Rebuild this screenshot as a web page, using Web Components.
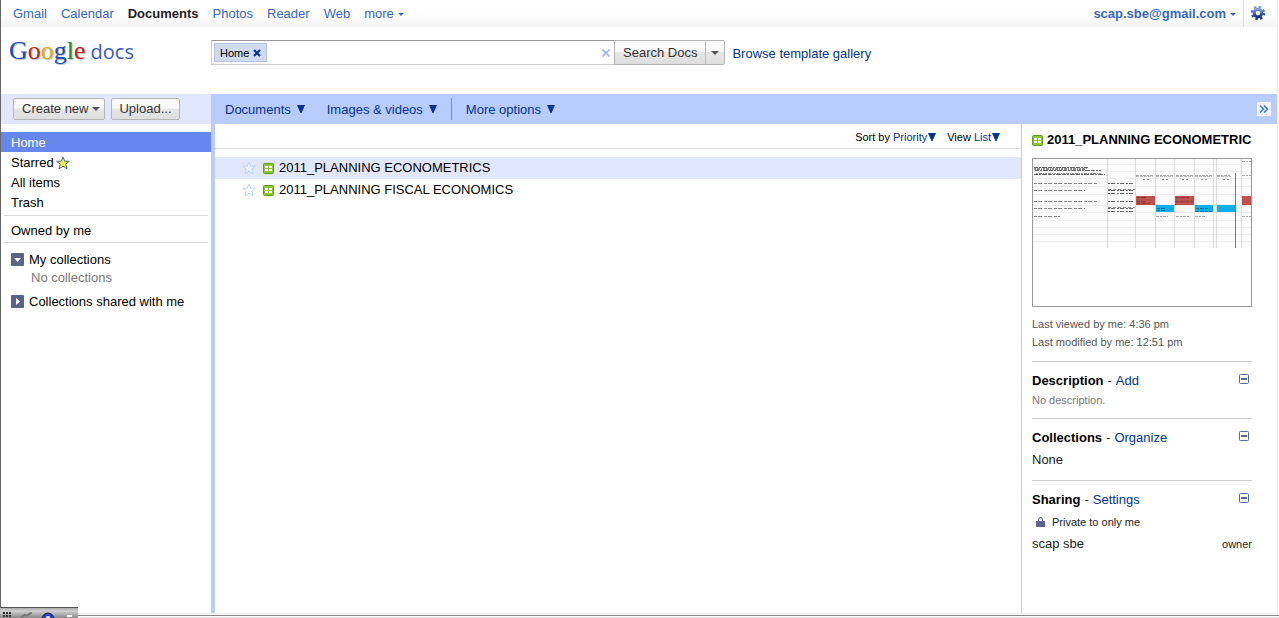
<!DOCTYPE html>
<html lang="en">
<head>
<meta charset="utf-8">
<title>Google Docs - Home</title>
<style>
  html, body { margin: 0; height: 100%; }
  body { font: 13px/20px "Liberation Sans", Arial, sans-serif; color: #000; background: #fff; overflow: hidden; }
</style>
</head>
<body>
<docs-app></docs-app>
<script>
const base = `
  *, *::before, *::after { box-sizing: border-box; }
  :host { display: block; }
  a { color: #039; text-decoration: none; }
  button { font: inherit; color: inherit; margin: 0; padding: 0; border: 0; background: none; cursor: pointer; }
  svg { display: block; flex: none; }
  h2, h3, p, ul { margin: 0; padding: 0; font-size: inherit; list-style: none; }
`;
function define(name, css, html) {
  const tpl = document.createElement('template');
  tpl.innerHTML = `<style>${base}${css}</style>${html}`;
  customElements.define(name, class extends HTMLElement {
    constructor() {
      super();
      this.attachShadow({ mode: 'open' }).append(tpl.content.cloneNode(true));
    }
  });
}

define('sheet-icon', `:host { flex: none; }`, `
  <svg width="11" height="11" viewBox="0 0 11 11" aria-hidden="true">
    <rect x=".5" y=".5" width="10" height="10" rx="1" fill="#8fc52f" stroke="#5c9e1c"/>
    <path d="M2 3h3v2H2zM6 3h3v2H6zM2 6h3v2H2zM6 6h3v2H6z" fill="#fff"/>
  </svg>`);

define('star-toggle', `:host { flex: none; } button { display: block; }`, `
  <button aria-label="Star">
    <svg width="14" height="14" viewBox="0 0 14 14">
      <path d="M7 .9l1.7 4.2 4.6.2-3.6 2.9 1.3 4.6L7 10.2l-4 2.6 1.3-4.6L.7 5.3l4.6-.2z" fill="#fff" fill-opacity=".5" stroke="#b5d3f5"/>
    </svg>
  </button>`);

define('menu-link', `
  button { display: flex; align-items: center; gap: 6px; color: #039; line-height: 20px; white-space: nowrap; }
  span { padding-top: 2px; }`, `
  <button><span><slot></slot></span>
    <svg width="8" height="8" viewBox="0 0 8 8"><path d="M0 0h8L4.500 8h-1z" fill="#039"/></svg>
  </button>`);

define('push-button', `
  button {
    display: flex; align-items: center; justify-content: center; width: 100%; height: 100%; gap: 4px;
    padding: 0 8px; border: 1px solid #b4b4b4; border-radius: var(--radius, 2px);
    background: linear-gradient(#fafafa 0 45%, #e6e6e6 50%, #dedede); color: #333; white-space: nowrap;
  }
  :host([menu]) button { padding: 0 4px 0 8px; }
  :host([compact]) button { padding: 0 7px; }
  :host([bare]) button { padding: 0; }`, `
  <button><slot></slot></button>`);

define('top-bar', `
  :host { display: flex; justify-content: space-between; height: 27px; padding-left: 12px; background: linear-gradient(#fff 50%, #f3f3f3); }
  nav, .account { display: flex; align-items: center; gap: 14px; }
  a { color: #36c; }
  a.current { color: #222; font-weight: bold; }
  .more { display: flex; align-items: center; gap: 4px; }
  .account { gap: 7px; }
  .account a { font-weight: bold; }
  .gear { display: flex; align-items: center; justify-content: center; width: 34px; height: 26px; padding-right: 6px; border-left: 1px solid #ddd; align-self: flex-start; }`, `
  <nav aria-label="Google products">
    <a href="#gmail">Gmail</a><a href="#calendar">Calendar</a><a href="#docs" class="current">Documents</a>
    <a href="#photos">Photos</a><a href="#reader">Reader</a><a href="#web">Web</a>
    <a href="#more" class="more">more <svg width="6" height="4" viewBox="0 0 6 4"><path d="M0 1h6L3 4z" fill="#36c"/></svg></a>
  </nav>
  <div class="account">
    <a href="#account" class="more">scap.sbe@gmail.com <svg width="6" height="4" viewBox="0 0 6 4"><path d="M0 1h6L3 4z" fill="#36c"/></svg></a>
    <button class="gear" aria-label="Settings">
      <svg width="14" height="14" viewBox="-7 -7 14 14">
        <defs><linearGradient id="g" x1="0" y1="0" x2="0" y2="1"><stop offset="0" stop-color="#7c9bd4"/><stop offset="1" stop-color="#17357f"/></linearGradient></defs>
        <circle r="6" fill="none" stroke="url(#g)" stroke-width="2.400" stroke-dasharray="2.350 2.360"/>
        <circle r="3.800" fill="none" stroke="url(#g)" stroke-width="3"/>
      </svg>
    </button>
  </div>`);

define('search-header', `
  :host { display: grid; grid-template-columns: 210px minmax(0, 1fr); height: 67px; }
  .logo { display: flex; align-items: baseline; gap: 5px; padding: 4px 0 0 8px; height: 40px; line-height: 40px; font-family: "Liberation Serif", serif; font-size: 26px; text-shadow: 1px 1px 1px #bbb; }
  .logo .docs { font: 20px/36px "Open Sans", sans-serif; color: #3558c8; text-shadow: none; }
  .b { color: #1c4fb4 } .r { color: #c5231c } .y { color: #e0a912 } .g { color: #1d8a2b }
  form { display: flex; align-items: flex-start; padding-top: 13px; }
  .field { display: flex; align-items: center; width: 404px; height: 25px; padding: 0 4px 0 2px; border: 1px solid #ccc; border-top-color: #999; }
  .chip { display: flex; align-items: center; gap: 4px; height: 19px; padding: 0 5px; border: 1px solid #b4c4e6; background: #d0dbee; font-size: 11px; }
  input { flex: 1; min-width: 0; height: 20px; padding: 0 4px; border: 0; outline: 0; background: none; font: inherit; }
  push-button { height: 25px; --radius: 0; margin-left: -1px; }
  .menu { width: 20px; --radius: 0 2px 2px 0; }
  .browse { margin-left: 7px; line-height: 28px; white-space: nowrap; }`, `
  <a class="logo" href="#home"><span><span class="b">G</span><span class="r">o</span><span class="y">o</span><span class="b">g</span><span class="g">l</span><span class="r">e</span></span><span class="docs">docs</span></a>
  <form role="search" onsubmit="return false">
    <div class="field">
      <span class="chip">Home <button type="button" aria-label="Remove Home"><svg width="8" height="8" viewBox="0 0 8 8"><path d="M1 1l6 6M7 1L1 7" stroke="#039" stroke-width="2.200"/></svg></button></span>
      <input type="text" aria-label="Search documents">
      <button type="button" aria-label="Clear search"><svg width="8" height="8" viewBox="0 0 8 8"><path d="M.5.500l7 7M7.500.500l-7 7" stroke="#9db5ec" stroke-width="1.600"/></svg></button>
    </div>
    <push-button>Search Docs</push-button>
    <push-button class="menu" bare><svg width="8" height="4" viewBox="0 0 8 4" aria-label="Search options"><path d="M0 0h8L4 4z" fill="#555"/></svg></push-button>
    <a class="browse" href="#templates">Browse template gallery</a>
  </form>`);

define('tool-bar', `
  :host { display: grid; grid-template-columns: 210px minmax(0, 1fr); height: 30px; }
  .create { display: flex; align-items: center; gap: 6px; padding-left: 12px; background: #e0e7ff; }
  push-button { height: 22px; }
  .filters { display: flex; align-items: center; padding: 0 6px 0 14px; background: #b9ccff; }
  .filters menu-link { margin-right: 22px; }
  .filters .last { margin-right: 14px; }
  .filters .options { margin-right: auto; padding-left: 14px; border-left: 1px solid #6c8bf0; }
  .collapse { width: 14px; height: 14px; background: #eef3ff; border: 1px solid #fff; border-radius: 1px; }`, `
  <div class="create">
    <push-button menu>Create new <svg width="8" height="4" viewBox="0 0 8 4"><path d="M0 0h8L4 4z" fill="#555"/></svg></push-button>
    <push-button compact>Upload...</push-button>
  </div>
  <div class="filters">
    <menu-link>Documents</menu-link>
    <menu-link class="last">Images &amp; videos</menu-link>
    <menu-link class="options">More options</menu-link>
    <button class="collapse" aria-label="Hide details"><svg width="12" height="12" viewBox="0 0 12 12"><path d="M2 2.500L5.500 6 2 9.500M6 2.500L9.500 6 6 9.500" fill="none" stroke="#3c76c4" stroke-width="1.500"/></svg></button>
  </div>`);

define('side-nav', `
  :host { padding-top: 8px; }
  a { display: flex; align-items: center; gap: 2px; height: 20px; padding: 2px 0 0 10px; color: #000; }
  a.current { background: #6688ee; color: #fff; }
  hr { height: 1px; margin: 3px 3px 4px; border: 0; background: #d9d9d9; }
  hr + a + hr { margin-top: 2px; }
  .group { gap: 5px; margin-top: 7px; }
  .group svg { margin-bottom: 2px; }
  hr + .group { margin-top: 6px; }
  .empty { padding: 1px 0 0 30px; line-height: 16px; color: #777; }
  .lower { margin-top: 5px; }`, `
  <nav aria-label="Folders">
    <a href="#home" class="current">Home</a>
    <a href="#starred">Starred <svg width="14" height="14" viewBox="0 0 14 14"><path d="M7 .9l1.700 4.200 4.600.2-3.600 2.900 1.300 4.600L7 10.200l-4 2.600 1.300-4.600L.7 5.300l4.600-.2z" fill="#fdf03a" stroke="#3f6d9e"/></svg></a>
    <a href="#all">All items</a>
    <a href="#trash">Trash</a>
    <hr>
    <a href="#owned">Owned by me</a>
    <hr>
    <a href="#collections" class="group"><svg width="13" height="13" viewBox="0 0 13 13"><rect width="13" height="13" rx="1" fill="#5b6388"/><path d="M3 5h7L6.500 9z" fill="#fff"/></svg>My collections</a>
    <p class="empty">No collections</p>
    <a href="#shared" class="group lower"><svg width="13" height="13" viewBox="0 0 13 13"><rect width="13" height="13" rx="1" fill="#5b6388"/><path d="M5 3v7l4-3.500z" fill="#fff"/></svg>Collections shared with me</a>
  </nav>`);

define('file-row', `
  :host { display: flex; align-items: center; height: 22px; padding-left: 27px; }
  :host([selected]) { background: #e0e7ff; }
  sheet-icon { margin: 0 5px 0 7px; }
  a { color: #000; white-space: nowrap; }`, `
  <star-toggle></star-toggle><sheet-icon></sheet-icon><a href="#file"><slot></slot></a>`);

define('file-list', `
  .options { display: flex; justify-content: flex-end; gap: 11px; height: 25px; padding-right: 21px; border-bottom: 1px solid #d9d9d9; font-size: 11px; line-height: 28px; }
  button { color: #039; display: flex; align-items: center; gap: 1px; }
  .options > span { display: flex; align-items: center; gap: 3px; height: 26px; }
  .rows { padding-top: 8px; }`, `
  <div class="options">
    <span>Sort by <button>Priority<svg width="8" height="8" viewBox="0 0 8 8"><path d="M0 0h8L4.500 8h-1z" fill="#039"/></svg></button></span>
    <span>View <button>List<svg width="8" height="8" viewBox="0 0 8 8"><path d="M0 0h8L4.500 8h-1z" fill="#039"/></svg></button></span>
  </div>
  <div class="rows">
    <file-row selected>2011_PLANNING ECONOMETRICS</file-row>
    <file-row>2011_PLANNING FISCAL ECONOMICS</file-row>
  </div>`);

define('sheet-preview', `:host { height: 149px; border: 1px solid #999; overflow: hidden; }`, `
  <svg width="218" height="147" viewBox="0 0 218 147" role="img" aria-label="Spreadsheet preview" shape-rendering="crispEdges">
    <rect width="218" height="89" fill="#fcfcfc"/>
    <path d="M0 5.500h218M0 12.500h218M0 19.500h218M0 27.500h218M0 35.500h218M0 46.500h218M0 53.500h218M0 61.500h218M0 68.500h218M0 75.500h218M0 82.500h218" stroke="#efefef"/>
    <path d="M74.500 0v89M102.500 0v89M122.500 0v89M141.500 0v89M161.500 0v89M180.500 0v89M183.500 0v89M208.500 0v89" stroke="#dcdcdc"/>
    <path d="M202.500 14v75" stroke="#777"/>
    <path fill="#c0504d" d="M103 37h19v9h-19zM142 37h19v9h-19zM209 37h9v9h-9z"/>
    <path fill="#0eaee8" d="M123 46h18v7h-18zM162 46h18v7h-18zM184 46h18v7h-18z"/>
    <g stroke="#888" fill="none">
      <path stroke-dasharray="4 1 2 1 5 1" d="M1 8.500h54M2 11.500h66M1 15.500h71" stroke="#666"/>
      <path stroke-dasharray="2 1 3 1 1 1" d="M1 9.500h53M1 10.500h52M3 14.500h65"/>
      <path stroke-dasharray="3 1 4 2" d="M1 24.500h63M1 31.500h51M1 42.500h63M1 49.500h51M1 57.500h26"/>
      <path stroke-dasharray="2 1 4 2" d="M75 24.500h27M75 31.500h27M75 34.500h27M75 42.500h27M75 49.500h27M75 52.500h27" stroke="#666"/>
      <path stroke-dasharray="3 2" d="M75 30.500h27M75 48.500h27"/>
      <path stroke-dasharray="3 1 2 1" d="M103 16.500h17M123 16.500h17M143 16.500h17M162 16.500h17M184 16.500h14M209 16.500h9M209 2.500h9" stroke="#aaa"/>
      <path stroke-dasharray="3 1" d="M103 17.500h17M123 17.500h17M143 17.500h17M162 17.500h17M184 17.500h14" stroke="#bbb"/>
      <path stroke-dasharray="2 2" d="M110 20.500h6M129 20.500h6M149 20.500h6M168 20.500h6M190 20.500h6"/>
      <path stroke-dasharray="3 1 2 1" d="M123 57.500h12M143 57.500h13M162 57.500h10M209 57.500h9" stroke="#aaa"/>
      <path stroke-dasharray="3 1 5 1" d="M104 38.500h10M104 42.500h10M104 44.500h13M143 38.500h14M143 42.500h17" stroke="#843a38"/>
      <path stroke-dasharray="3 1 4 1" d="M124 49.500h9M124 51.500h9M163 49.500h12M163 52.500h16" stroke="#0b75a4"/>
    </g>
  </svg>`);

define('detail-section', `
  :host { border-top: 1px solid #ccc; }
  header { display: flex; align-items: center; height: 20px; margin-top: 8px; padding-top: 2px; gap: 4px; }
  .box { margin-left: auto; padding: 0 3px 4px 0; }`, `
  <header><h3><slot name="title"></slot></h3>-<slot name="action"></slot>
    <button class="box" aria-label="Collapse"><svg width="10" height="10" viewBox="0 0 10 10"><rect x=".5" y=".5" width="9" height="9" rx="1" fill="#fff" stroke="#5468a8"/><path d="M2 5h6" stroke="#5468a8" stroke-width="2"/></svg></button>
  </header>
  <slot></slot>`);

define('detail-pane', `
  :host { padding: 6px 25px 0 10px; border-left: 1px solid #ccc; color: #222; }
  .title { display: flex; align-items: center; gap: 4px; height: 20px; overflow: hidden; white-space: nowrap; color: #000; }
  sheet-preview { margin: 8px 0; }
  .meta { font-size: 11px; line-height: 18px; color: #555; }
  detail-section.first { margin-top: 10px; }
  b { color: #000; }
  .none { height: 28px; font-size: 11px; line-height: 20px; color: #777; }
  .value { height: 33px; padding-top: 3px; }
  .lock { display: flex; align-items: center; gap: 7px; height: 22px; padding: 4px 0 0 4px; font-size: 11px; }
  .owner { display: flex; justify-content: space-between; margin-top: 3px; }
  .owner small { font-size: 11px; }`, `
  <h2 class="title"><sheet-icon></sheet-icon>2011_PLANNING ECONOMETRICS</h2>
  <sheet-preview></sheet-preview>
  <p class="meta">Last viewed by me: 4:36 pm</p>
  <p class="meta">Last modified by me: 12:51 pm</p>
  <detail-section class="first"><b slot="title">Description</b><a slot="action" href="#add">Add</a>
    <p class="none">No description.</p></detail-section>
  <detail-section><b slot="title">Collections</b><a slot="action" href="#organize">Organize</a>
    <p class="value">None</p></detail-section>
  <detail-section><b slot="title">Sharing</b><a slot="action" href="#settings">Settings</a>
    <p class="lock"><svg width="9" height="10" viewBox="0 0 9 10"><path d="M2.500 5V2.500a2 2 0 0 1 4 0V5" fill="none" stroke="#5a6296"/><path d="M0 4h9v6H0z" fill="#5a6296"/></svg>Private to only me</p>
    <p class="owner"><span>scap sbe</span><small>owner</small></p></detail-section>`);

define('window-tray', `
  :host { width: 78px; height: 11px; border-top: 1px solid #555; background: linear-gradient(#aaa, #d0d0d0 30%, #888); overflow: hidden; }`, `
  <svg width="78" height="10" viewBox="0 0 78 10" aria-hidden="true">
    <path d="M3 5h8M3 8h8" stroke="#333" stroke-width="2" stroke-dasharray="2 1"/>
    <path d="M21 10c4-6 5-1 7-3s2-2 4-2" fill="none" stroke="#777" stroke-width="2"/>
    <circle cx="48" cy="11" r="6" fill="#2444c8" stroke="#123"/><circle cx="48" cy="10" r="2" fill="#fff"/>
    <path d="M67 7h5v2h-5z" fill="#fff"/>
  </svg>`);

define('docs-app', `
  :host { position: relative; display: flex; flex-direction: column; min-height: 100vh; }
  .page { flex: 1; display: flex; flex-direction: column; margin-right: 1px; border-left: 1px solid #666; border-right: 1px solid #eee; border-bottom: 1px solid #eee; }
  main { flex: 1; display: grid; grid-template-columns: 210px minmax(0, 1fr) 256px; }
  file-list { border-left: 4px solid #b9ccff; }
  .edge { height: 4px; border-top: 1px solid #fff; background: linear-gradient(#888 0 1px, #fff 1px 2px, #ddd 2px); }
  window-tray { position: absolute; left: 0; bottom: 0; }`, `
  <div class="page">
    <top-bar></top-bar>
    <search-header></search-header>
    <tool-bar></tool-bar>
    <main><side-nav></side-nav><file-list></file-list><detail-pane></detail-pane></main>
  </div>
  <div class="edge"></div>
  <window-tray></window-tray>`);
</script>
</body>
</html>
